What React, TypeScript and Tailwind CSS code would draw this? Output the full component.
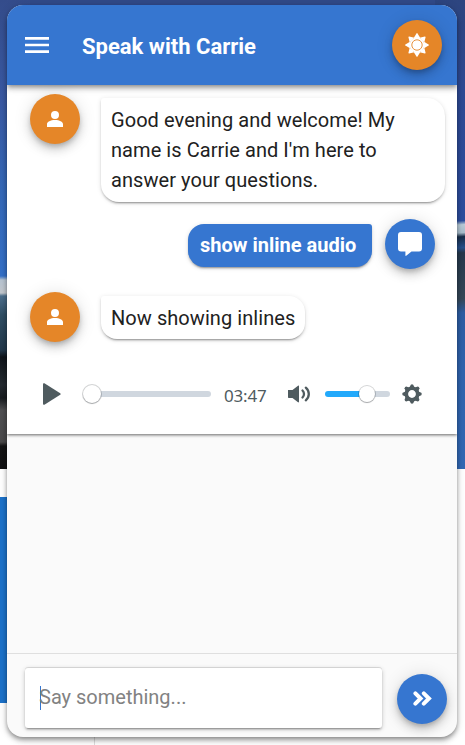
import React from "react";

function PersonIcon() {
  return (
    <svg className="size-6 fill-white" viewBox="0 0 24 24">
      <path d="M12 4a4 4 0 1 1 0 8 4 4 0 0 1 0-8Zm0 8.900c4.420 0 8 1.700 8 4V20H4v-3.100C4 14.600 7.580 12.900 12 12.900Z" />
    </svg>
  );
}

function SunIcon() {
  return (
    <svg className="size-6" viewBox="-12 -12 24 24">
      <g className="fill-white">
        <circle r="7.400" />
        {[0, 45, 90, 135, 180, 225, 270, 315].map((a) => (
          <path key={a} d="M-3.300-7 -.5-11.600Q0-12.200.5-11.600L3.300-7Z" transform={`rotate(${a})`} />
        ))}
      </g>
      <circle r="5.200" className="fill-none stroke-[#e58628]" strokeWidth="0.900" />
    </svg>
  );
}

function Round({ color, children }: { color: string; children: React.ReactNode }) {
  return (
    <div
      className={`flex size-[50px] shrink-0 items-center justify-center rounded-full shadow-[0_3px_5px_-1px_rgba(0,0,0,0.2),0_6px_10px_rgba(0,0,0,0.14),0_1px_18px_rgba(0,0,0,0.12)] ${color}`}
    >
      {children}
    </div>
  );
}

const bubble =
  "shadow-[0_3px_1px_-2px_rgba(0,0,0,0.2),0_2px_2px_rgba(0,0,0,0.14),0_1px_5px_rgba(0,0,0,0.12)] text-[20px] leading-[30px]";

function Backdrop() {
  return (
    <div className="absolute inset-0 flex flex-col bg-white">
      <div className="flex h-[469px] justify-between bg-[#314a89]">
        <div className="w-[30px] bg-[linear-gradient(180deg,#344c8b_0,#3a5aa3_100px,#3569b8_190px,#3470c8_276px,#b8c5d2_280px,#c3c8ce_293px,#4d6f8d_296px,#304f65_315px,#23394c_350px,#10151b_357px,#252b31_385px,#181c20_398px,#505052_410px,#4b4a4b_442px,#151516_446px,#111112_469px)]" />
        <div className="w-[30px] bg-[linear-gradient(176deg,#2d457f_0,#2e4a94_90px,#2d4e9e_222px,#b9cbd7_226px,#a9bdcc_234px,#182c48_238px,#27508b_249px,#26384d_254px,#354858_300px,#2d5da3_314px,#3064ae_370px,#3268b4_469px)]" />
      </div>
      <div className="h-7" />
      <div className="h-[206px] w-[30px] bg-[#1c72ca]" />
      <div className="ml-[94px] flex-1 border-l border-[#dddddd]" />
    </div>
  );
}

function Player() {
  return (
    <div className="mt-[31px] flex h-[42px] items-center pl-9 text-[#4f5b5f]">
      <svg className="h-[22px] w-[18px] fill-current" viewBox="0 0 18 22">
        <path d="M0 1.300C0 .2 1 0 1.800.5L17.200 10.200c.7.500.7 1.100 0 1.600L1.800 21.500C1 22 0 21.800 0 20.700Z" />
      </svg>
      <div className="ml-[22px] flex h-[6px] w-[128px] items-center rounded-full bg-[linear-gradient(90deg,transparent_8px,#d0d7df_8px)]">
        <div className="size-[18px] shrink-0 rounded-full bg-white shadow-[0_1px_1px_rgba(35,41,47,0.25),0_0_0_1px_rgba(35,41,47,0.2)]" />
      </div>
      <div className="ml-[13px] mt-[3px] w-[44px] whitespace-nowrap font-['Noto_Sans',sans-serif] text-[17px] tracking-[-0.200px]">03:47</div>
      <svg className="ml-5 h-[18px] w-[22px] fill-current" viewBox="0 0 22 18">
        <path d="M0 5h4.500L10 .7c.5-.3 1-.2 1 .5v15.600c0 .7-.5.8-1 .5L4.500 13H.6L0 12.400Z" />
        <path className="fill-none stroke-current" strokeWidth="2.300" strokeLinecap="round" d="M14.500 5.500c2 2 2 5 0 7M17.800 2.700c4 3.500 4 9.100 0 12.600" />
      </svg>
      <div className="ml-[15px] flex h-[6px] w-[65px] items-center rounded-full bg-[linear-gradient(90deg,#22a9fb_42px,#d0d7df_42px)] pl-[34px]">
        <div className="size-4 shrink-0 rounded-full bg-white shadow-[0_1px_1px_rgba(35,41,47,0.25),0_0_0_1px_rgba(35,41,47,0.2)]" />
      </div>
      <svg className="ml-3 size-5" viewBox="-10 -10 20 20">
        <g className="fill-current">
          {[0, 45, 90, 135, 180, 225, 270, 315].map((a) => (
            <path key={a} d="M-2.800-6-1.200-9.300Q0-10.100 1.200-9.300L2.800-6Z" transform={`rotate(${a})`} />
          ))}
        </g>
        <circle r="5.700" className="fill-none stroke-current" strokeWidth="3.600" />
      </svg>
    </div>
  );
}

export default function App() {
  return (
    <div className="relative h-[745px] w-[465px] overflow-hidden font-[Roboto,sans-serif] text-[#212121]">
      <Backdrop />
      <div className="relative h-full px-[7px] pt-[5px]">
        <main className="mr-[1px] flex h-[732px] w-[450px] flex-col overflow-hidden rounded-2xl bg-[#fafafa] shadow-[0_2px_4px_-1px_rgba(0,0,0,0.3),0_4px_5px_rgba(0,0,0,0.2),0_1px_10px_rgba(0,0,0,0.15)]">
          <header className="z-10 flex h-20 shrink-0 items-center bg-[#3676d0] pl-[14px] pr-[15px] shadow-[0_2px_4px_-1px_rgba(0,0,0,0.3),0_4px_5px_rgba(0,0,0,0.18),0_1px_10px_rgba(0,0,0,0.12)]">
            <svg className="size-8 fill-white" viewBox="0 0 24 24">
              <path d="M3 18h18v-2H3v2Zm0-5h18v-2H3v2Zm0-7v2h18V6H3Z" />
            </svg>
            <h1 className="ml-[29px] mt-[2px] flex-1 text-[22px] font-bold text-white">Speak with Carrie</h1>
            <Round color="bg-[#e58628]">
              <SunIcon />
            </Round>
          </header>

          <section className="h-[349px] shrink-0 bg-white pt-[9px] shadow-[0_1px_3px_rgba(0,0,0,0.6)]">
            <div className="flex items-start pl-[23px]">
              <Round color="bg-[#e58628]"><PersonIcon /></Round>
              <p className={`ml-[21px] mt-1 h-[104px] w-[344px] rounded-[18px] rounded-tl-[3px] bg-white pl-[10px] pt-[7px] tracking-[0.060px] ${bubble}`}>
                Good evening and welcome! My
                <br />
                name is Carrie and I'm here to
                <br />
                answer your questions.
              </p>
            </div>
            <div className="mt-[17px] flex items-start justify-end pr-[22px]">
              <p className={`mr-[13px] mt-[5px] h-[43px] w-[184px] rounded-2xl rounded-tr-[3px] bg-[#3676d0] pl-3 pt-[6px] font-bold text-white ${bubble}`}>
                show inline audio
              </p>
              <Round color="bg-[#3676d0]">
                <svg className="size-6 fill-white" viewBox="0 0 24 24">
                  <path d="M3 0h18q3 0 3 3v13.500q0 3-3 3h-7.500L8.200 23.800Q7.400 24.200 7.400 23.300V19.500H3q-3 0-3-3V3q0-3 3-3Z" />
                </svg>
              </Round>
            </div>
            <div className="mt-[23px] flex items-start pl-[23px]">
              <Round color="bg-[#e58628]"><PersonIcon /></Round>
              <p className={`ml-[21px] mt-[4px] h-[43px] w-[204px] rounded-2xl rounded-tl-[3px] bg-white pl-[10px] pt-[7px] tracking-[0.060px] ${bubble}`}>
                Now showing inlines
              </p>
            </div>
            <Player />
          </section>

          <div className="flex-1" />

          <footer className="flex h-[84px] shrink-0 items-start border-t border-[#dfdfdf] pl-[18px] pt-[14px]">
            <div className="flex h-[60px] w-[357px] items-center rounded-[3px] bg-white pl-[15px] shadow-[0_3px_1px_-2px_rgba(0,0,0,0.2),0_2px_2px_rgba(0,0,0,0.14),0_1px_5px_rgba(0,0,0,0.2),0_-1px_0_rgba(0,0,0,0.1)]">
              <span className="h-6 w-px bg-[#3676d0]" />
              <span className="-ml-[2px] -mt-[2px] text-[20px] text-[#828282]">Say something...</span>
            </div>
            <div className="ml-[15px] mt-[6px]">
              <Round color="bg-[#3676d0]">
                <svg className="h-4 w-5 fill-none stroke-white" viewBox="0 0 20 16" strokeWidth="4" strokeLinecap="round" strokeLinejoin="miter">
                  <path d="m3.400 2.300 5.200 5.200-5.200 5.200M11.800 2.300 17 7.500l-5.200 5.200" />
                </svg>
              </Round>
            </div>
          </footer>
        </main>
      </div>
    </div>
  );
}
